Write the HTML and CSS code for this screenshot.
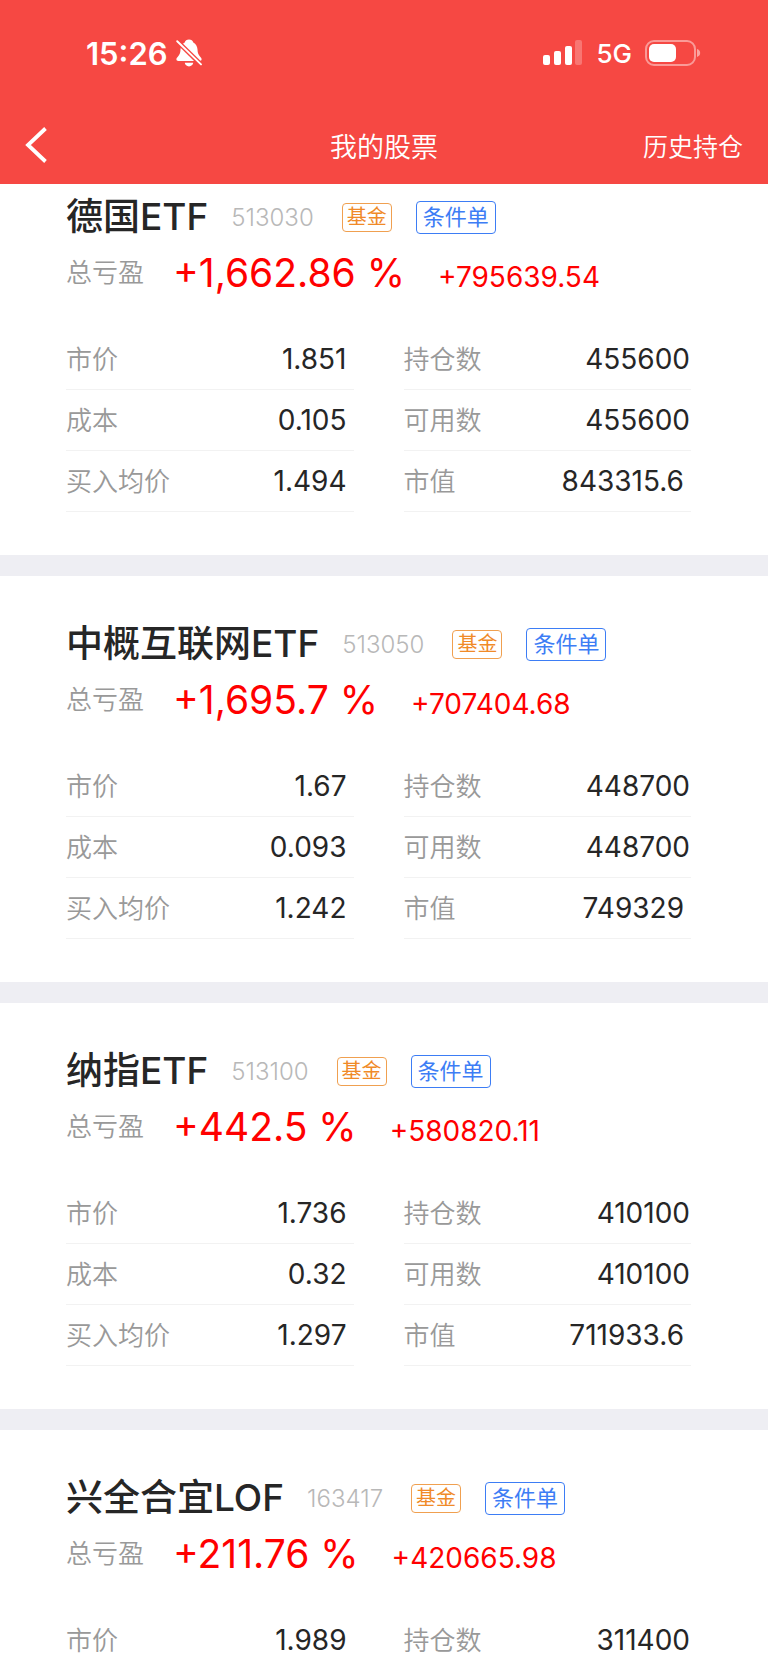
FILE: index.html
```html
<!DOCTYPE html>
<html lang="zh-CN">
<head>
  <meta charset="UTF-8" />
  <meta name="viewport" content="width=device-width, initial-scale=1.0" />
  <title>我的股票</title>
  <link rel="stylesheet" href="styles.css">
</head>
<body>
  <header class="top">
    <div class="status">
      <div class="status-left">
        <span class="time">15:26</span>
        <svg class="bell" viewBox="0 0 26 28" aria-hidden="true">
          <path d="M13 .6c-2.200 0-3.800 1.200-4.300 2.900C6 5 4.600 7.600 4.500 10.600c-.1 3.600-1 5.300-2.700 7.200C.9 18.800.4 19.500.4 20.300c0 1 .7 1.700 1.900 1.700h21.400c1.200 0 1.900-.7 1.900-1.700 0-.8-.5-1.500-1.400-2.500-1.700-1.900-2.600-3.600-2.700-7.200-.1-3-1.500-5.600-4.200-7.100C16.800 1.800 15.200.6 13 .6z" fill="#fff"/>
          <path d="M8.800 23.800h8.400c-.2 2-2 3.600-4.200 3.600s-4-1.600-4.200-3.600z" fill="#fff"/>
          <path d="M.5 1.500l25 24.500" stroke="#f64843" stroke-width="4.600"/>
          <path d="M1.200 2.200l23.800 23.200" stroke="#fff" stroke-width="1.900" stroke-linecap="round"/>
        </svg>
      </div>
      <div class="status-right">
        <svg class="signal" viewBox="0 0 40 26" aria-hidden="true">
          <rect x="0" y="15" width="7" height="10" rx="2" fill="#fff"/>
          <rect x="11" y="11" width="7" height="14" rx="2" fill="#fff"/>
          <rect x="22" y="6" width="7" height="19" rx="2" fill="#fff"/>
          <rect x="32" y="0" width="7" height="25" rx="2" fill="#fff" fill-opacity=".25"/>
        </svg>
        <span class="net">5G</span>
        <svg class="battery" viewBox="0 0 56 26" aria-hidden="true">
          <rect x="1" y="1" width="49" height="24" rx="8" fill="none" stroke="#fff" stroke-opacity=".45" stroke-width="2"/>
          <rect x="4" y="4" width="27" height="18" rx="5" fill="#fff"/>
          <path d="M52 9c2 .6 3.200 2.200 3.200 4s-1.200 3.400-3.200 4z" fill="#fff" fill-opacity=".5"/>
        </svg>
      </div>
    </div>
    <nav class="nav">
      <button class="back" aria-label="返回">
        <svg viewBox="0 0 22 36" aria-hidden="true"><path d="M20.500 1.500L3 18L20.500 34.500" fill="none" stroke="#fff" stroke-width="3.800"/></svg>
      </button>
      <h1>我的股票</h1>
      <a class="history" href="#">历史持仓</a>
    </nav>
  </header>

  <main>
    <section class="card card-first">
      <div class="name-row">
        <h2>德国ETF</h2>
        <span class="code">513030</span>
        <span class="tag">基金</span>
        <button class="order">条件单</button>
      </div>
      <div class="total">
        <span class="label">总亏盈</span>
        <span class="rate">+1,662.86 %</span>
        <span class="amount">+795639.54</span>
      </div>
      <div class="details">
        <dl>
          <div><dt>市价</dt><dd>1.851</dd></div>
          <div><dt>成本</dt><dd>0.105</dd></div>
          <div><dt>买入均价</dt><dd>1.494</dd></div>
        </dl>
        <dl class="hold">
          <div><dt>持仓数</dt><dd>455600</dd></div>
          <div><dt>可用数</dt><dd>455600</dd></div>
          <div><dt>市值</dt><dd class="value">843315.6</dd></div>
        </dl>
      </div>
    </section>

    <section class="card">
      <div class="name-row">
        <h2>中概互联网ETF</h2>
        <span class="code">513050</span>
        <span class="tag">基金</span>
        <button class="order">条件单</button>
      </div>
      <div class="total">
        <span class="label">总亏盈</span>
        <span class="rate">+1,695.7 %</span>
        <span class="amount">+707404.68</span>
      </div>
      <div class="details">
        <dl>
          <div><dt>市价</dt><dd>1.67</dd></div>
          <div><dt>成本</dt><dd>0.093</dd></div>
          <div><dt>买入均价</dt><dd>1.242</dd></div>
        </dl>
        <dl class="hold">
          <div><dt>持仓数</dt><dd>448700</dd></div>
          <div><dt>可用数</dt><dd>448700</dd></div>
          <div><dt>市值</dt><dd class="value">749329</dd></div>
        </dl>
      </div>
    </section>

    <section class="card">
      <div class="name-row">
        <h2>纳指ETF</h2>
        <span class="code">513100</span>
        <span class="tag">基金</span>
        <button class="order">条件单</button>
      </div>
      <div class="total">
        <span class="label">总亏盈</span>
        <span class="rate">+442.5 %</span>
        <span class="amount">+580820.11</span>
      </div>
      <div class="details">
        <dl>
          <div><dt>市价</dt><dd>1.736</dd></div>
          <div><dt>成本</dt><dd>0.32</dd></div>
          <div><dt>买入均价</dt><dd>1.297</dd></div>
        </dl>
        <dl class="hold">
          <div><dt>持仓数</dt><dd>410100</dd></div>
          <div><dt>可用数</dt><dd>410100</dd></div>
          <div><dt>市值</dt><dd class="value">711933.6</dd></div>
        </dl>
      </div>
    </section>

    <section class="card">
      <div class="name-row">
        <h2>兴全合宜LOF</h2>
        <span class="code">163417</span>
        <span class="tag">基金</span>
        <button class="order">条件单</button>
      </div>
      <div class="total">
        <span class="label">总亏盈</span>
        <span class="rate">+211.76 %</span>
        <span class="amount">+420665.98</span>
      </div>
      <div class="details">
        <dl>
          <div><dt>市价</dt><dd>1.989</dd></div>
        </dl>
        <dl class="hold">
          <div><dt>持仓数</dt><dd>311400</dd></div>
        </dl>
      </div>
    </section>
  </main>
</body>
</html>
```

FILE: styles.css
```css
* { box-sizing: border-box; }
body { margin: 0; height: 100vh; display: flex; flex-direction: column; overflow: hidden; background: #fff; color: #262626; font-family: Inter, "Noto Sans CJK SC", sans-serif; }
h1, h2, dl, dd { margin: 0; }
button { padding: 0; background: none; font-family: inherit; cursor: pointer; }
svg { display: block; }

/* header */
.top { flex: none; background: #f64843; color: #fff; }
.status { display: flex; justify-content: space-between; align-items: center; height: 106px; padding: 0 67px 0 86px; }
.status-left, .status-right { display: flex; align-items: center; }
.status-left { gap: 8px; }
.time { font-size: 31px; font-weight: 600; }
.bell { width: 26px; height: 28px; }
.signal { width: 40px; height: 26px; }
.net { margin: 0 13px; font-size: 26px; font-weight: 500; }
.battery { width: 56px; height: 26px; }
.nav { display: grid; grid-template-columns: 1fr auto 1fr; align-items: center; height: 78px; padding: 0 25px; }
.back { justify-self: start; border: none; }
.back svg { width: 22px; height: 36px; }
.nav h1 { font-size: 27px; font-weight: 350; }
.history { justify-self: end; color: #fff; font-size: 25px; font-weight: 350; text-decoration: none; }

/* holdings */
main { flex: 1; min-height: 0; overflow-y: auto; scrollbar-width: none; }
.card { padding: 45px 77px 43px 66px; }
.card + .card { border-top: 21px solid #eeeef3; }
.card-first { padding-top: 10px; }
.name-row { display: flex; align-items: center; height: 46px; }
.name-row h2 { font-size: 37px; font-weight: 500; line-height: 46px; }
.code { margin: 0 28px 0 23px; color: #b8b8b8; font-size: 24px; font-weight: 300; }
.tag { padding: 0 4px; border: 1px solid #f0a050; border-radius: 4px; color: #f08a28; font-size: 20px; line-height: 27px; }
.order { margin-left: 24px; padding: 0 6px; border: 1px solid #3d7df5; border-radius: 4px; color: #3d7df5; font-size: 22px; line-height: 31px; }
.total { display: flex; align-items: baseline; height: 66px; line-height: 66px; }
.label, dt { color: #999; font-size: 26px; font-weight: 350; }
.label { align-self: center; }
.rate { margin: 0 33px 0 29px; color: #f00; font-size: 39px; }
.amount { color: #f00; font-size: 28px; }
.details { display: grid; grid-template-columns: 1fr 1fr; gap: 50px; padding-top: 23px; }
dl div { display: flex; justify-content: space-between; align-items: baseline; height: 61px; padding-right: 7px; border-bottom: 1px solid #f2f2f2; line-height: 60px; }
.hold div { padding-right: 1px; }
dd { font-size: 28px; }
.value { padding-right: 6px; }
```
